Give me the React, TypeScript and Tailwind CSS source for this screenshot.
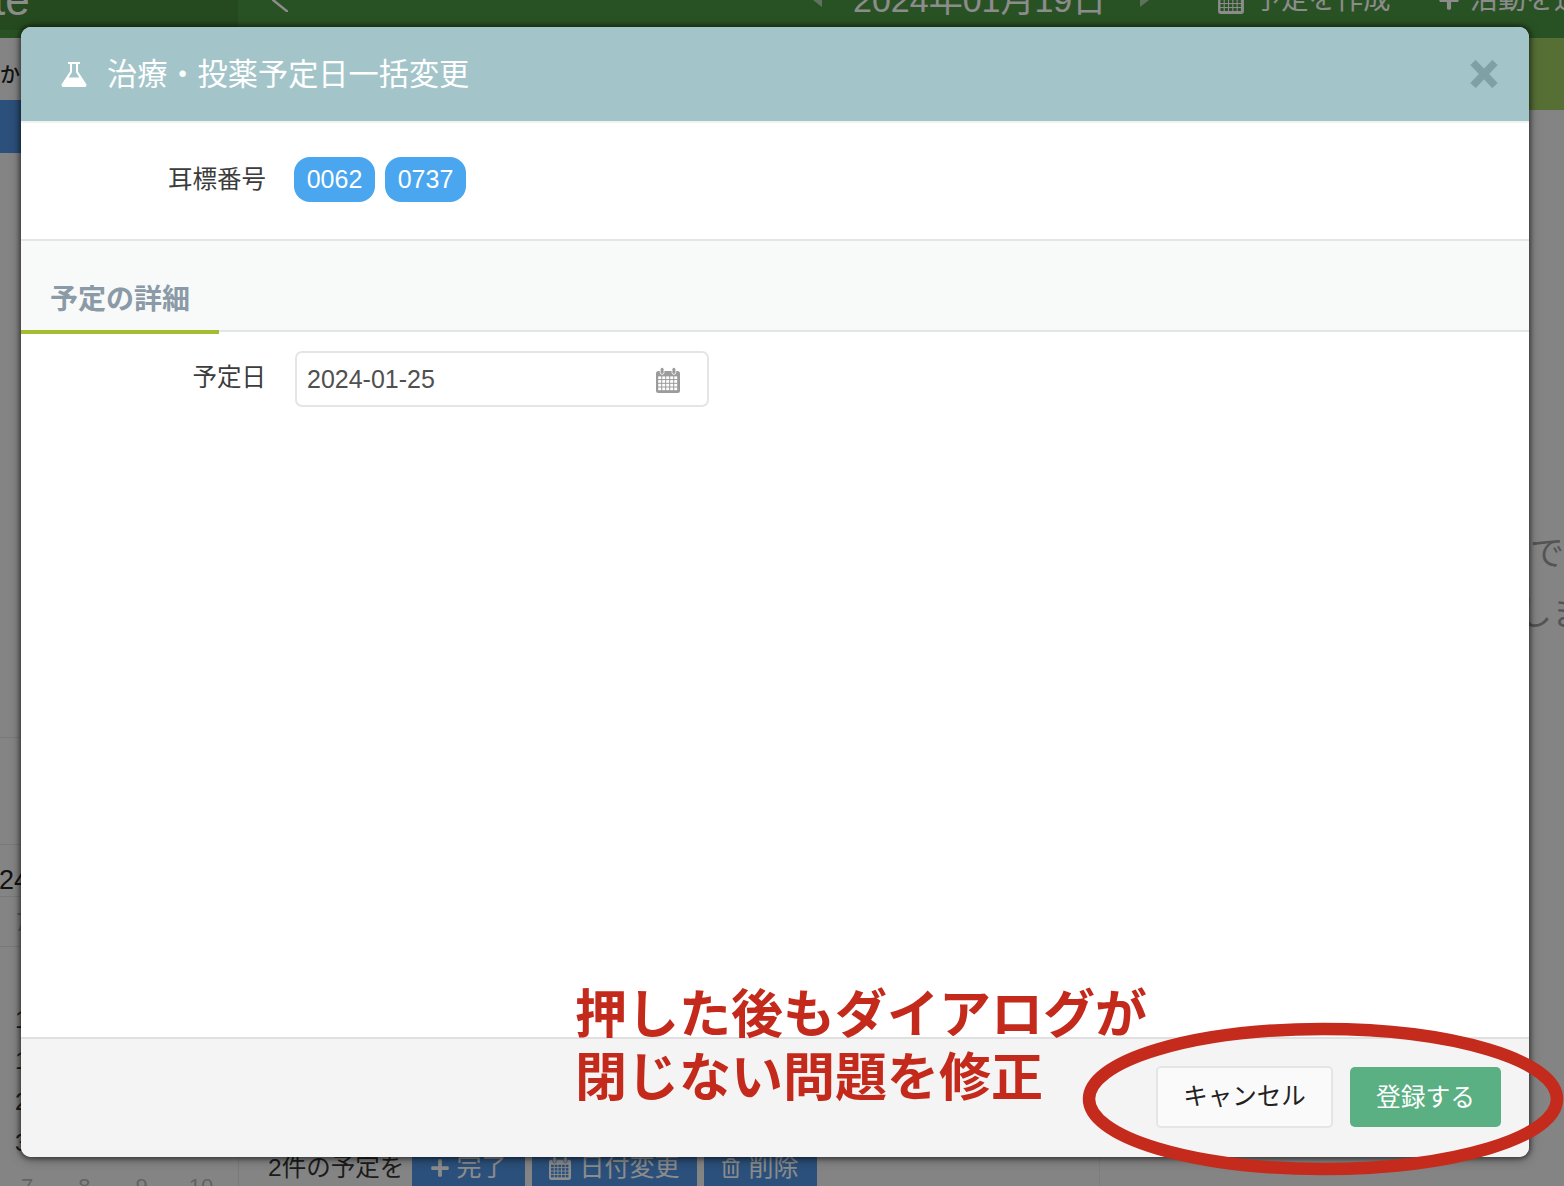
import React from "react";
import { FaPlus, FaRegTrashAlt } from "react-icons/fa";

function CalendarIcon({ className, cell = "white" }: { className: string; cell?: string }) {
  const cells = [];
  for (let r = 0; r < 4; r++) {
    for (let c = 0; c < 5; c++) {
      cells.push(<rect key={`${r}-${c}`} x={2.2 + c * 4} y={9.4 + r * 3.7} width="3" height="2.7" fill={cell} />);
    }
  }
  return (
    <svg viewBox="0 0 24 26" className={className}>
      <path d="M0 6.5a2.5 2.5 0 0 1 2.5-2.5H21.5a2.5 2.5 0 0 1 2.5 2.5V23.5a2.5 2.5 0 0 1-2.5 2.5H2.5A2.5 2.5 0 0 1 0 23.5Z" fill="currentColor" />
      {cells}
      <rect x="4.2" y="0.4" width="3.8" height="7" rx="1.9" fill="currentColor" stroke={cell} strokeWidth="0.8" />
      <rect x="16" y="0.4" width="3.8" height="7" rx="1.9" fill="currentColor" stroke={cell} strokeWidth="0.8" />
    </svg>
  );
}

function FlaskIcon() {
  return (
    <svg viewBox="0 0 26 26" className="h-[26px] w-[26px]" fill="currentColor" fillRule="evenodd">
      <path d="M7 1h12v2h-2v7.5l8.2 12.5c.8 1.3 0 3-1.6 3H2.4C.8 26 0 24.3.8 23L9 10.5V3H7ZM11 3v8.2L7.6 16.5h10.8L15 11.2V3Z" />
    </svg>
  );
}

// page behind the dialog, only the edges of it are visible
function BackgroundPage() {
  return (
    <div className="flex h-full flex-col bg-[#f1f1f1] text-[#2b2b2b]">
      <div className="flex h-[38px] shrink-0 overflow-hidden bg-[#4c9542] text-white">
        <div className="-mt-[30px] flex h-[60px] w-[238px] shrink-0 items-center overflow-hidden bg-[#45883a]">
          <span className="-ml-[7px] text-[44px] leading-none">te</span>
        </div>
        <div className="-mt-[30px] flex h-[60px] shrink-0 items-center whitespace-nowrap">
          <svg viewBox="0 0 16 24" className="ml-[34px] h-[24px] w-[16px] shrink-0" fill="none" stroke="currentColor" strokeWidth="2.5">
            <path d="M16 24 1 12 16 0" />
          </svg>
          <svg viewBox="0 0 9 14" className="ml-[525px] h-[14px] w-[9px] shrink-0" fill="currentColor" opacity="0.55">
            <path d="M9 0v14L0 7Z" />
          </svg>
          <span className="ml-[31px] w-[252px] text-[34px]">2024年01月19日</span>
          <svg viewBox="0 0 9 14" className="ml-[35px] h-[14px] w-[9px] shrink-0" fill="currentColor" opacity="0.55">
            <path d="M0 0v14l9-7Z" />
          </svg>
          <CalendarIcon className="ml-[69px] h-[28px] w-[26px] shrink-0" cell="#4c9542" />
          <span className="ml-[10px] w-[139px] text-[27.3px]">予定を作成</span>
          <FaPlus className="ml-[45px] h-[22px] w-[22px] shrink-0" />
          <span className="ml-[10px] text-[28px]">活動を追加</span>
        </div>
      </div>

      <div className="flex min-h-0 flex-1">
        <div className="flex w-[239px] shrink-0 flex-col overflow-hidden border-r border-[#dddddd] text-[24px]">
          <div className="flex h-[62px] shrink-0 items-end pb-[15px] text-[20px] font-medium leading-none text-[#222222]">か</div>
          <div className="h-[53px] shrink-0 bg-[#4f93e0]" />
          <div className="h-[585px] shrink-0 border-b border-[#dcdcdc]" />
          <div className="h-[107px] shrink-0 border-b border-[#dcdcdc]" />
          <div className="flex h-[52px] shrink-0 items-end border-b border-[#dcdcdc] pb-[2px] text-[27px] leading-none text-[#222222]">
            <span className="-ml-[1px]">24</span>
          </div>
          <div className="flex h-[50px] shrink-0 items-center border-b border-[#dcdcdc] pl-[16px] text-[#aaaaaa]">ｱ</div>
          <div className="flex h-[229px] shrink-0 flex-col pl-[15px] leading-[41px] text-[#333333]">
            <div className="pt-[52px]">1</div>
            <div>1</div>
            <div>2</div>
            <div>3</div>
          </div>
          <div className="flex gap-[45px] pl-[21px] text-[22px] leading-none text-[#b5b5b5]">
            <span>7</span>
            <span>8</span>
            <span>9</span>
            <span className="-ml-[4px]">10</span>
          </div>
        </div>

        <div className="flex min-w-0 flex-1 flex-col">
          <div className="h-[72px] shrink-0 bg-[#9cca62]" />
          <div className="flex min-h-0 flex-1">
            <div className="flex w-[861px] shrink-0 flex-col justify-end overflow-hidden border-r border-[#e4e4e4]">
              <div className="flex h-[36px] items-stretch pl-[29px]">
                <span className="flex w-[144px] items-center whitespace-nowrap text-[24.5px] text-[#333333]">2件の予定を</span>
                <div className="flex w-[113px] items-center justify-center gap-[6px] bg-[#4f93e0] text-[25px] text-white">
                  <FaPlus className="h-[20px] w-[20px]" />
                  完了
                </div>
                <div className="ml-[7px] flex w-[165px] items-center justify-center gap-[8px] bg-[#4f93e0] text-[25px] text-[#ffffff]">
                  <CalendarIcon className="h-[26px] w-[22px] text-white" cell="#4f93e0" />
                  日付変更
                </div>
                <div className="ml-[7px] flex w-[113px] items-center justify-center gap-[8px] bg-[#4f93e0] text-[25px] text-white">
                  <FaRegTrashAlt className="h-[20px] w-[18px]" />
                  削除
                </div>
              </div>
            </div>
            <div className="flex-1 overflow-hidden whitespace-nowrap pl-[330px] pt-[413px] text-[34px] leading-[60px] text-[#999999]">
              <div className="pl-[100px]">で</div>
              <div className="pl-[88px]">しま</div>
            </div>
          </div>
        </div>
      </div>
    </div>
  );
}

function Dialog() {
  return (
    <div className="absolute left-[21px] top-[27px] flex h-[1130px] w-[1508px] flex-col overflow-hidden rounded-[10px] bg-white shadow-[0_0_4px_2px_rgba(0,0,0,0.4),0_2px_12px_rgba(0,0,0,0.35)]">
      <div className="flex h-[96px] shrink-0 items-center border-b-2 border-[#f1f3f3] bg-[#a3c5c9] pl-[40px] pr-[31px] text-white">
        <FlaskIcon />
        <h1 className="ml-[20px] mt-[2px] text-[30.2px] font-normal leading-none">治療・投薬予定日一括変更</h1>
        <svg viewBox="0 0 28 28" className="ml-auto h-[28px] w-[28px] text-[#7fa0a4]" fill="none" stroke="currentColor" strokeWidth="7.5">
          <path d="M3 2.5 25 25.5M25 2.5 3 25.5" />
        </svg>
      </div>

      <div className="flex h-[118px] shrink-0 border-b-2 border-[#e3e6e7] pt-[34px]">
        <label className="mt-[3px] h-[40px] w-[245px] text-right text-[24.5px] leading-[40px] text-[#3c3c3c]">耳標番号</label>
        <div className="ml-[28px] flex gap-[10px]">
          <span className="flex h-[45px] w-[81px] items-center justify-center rounded-[16px] bg-[#4aa6ef] text-[25px] text-white">0062</span>
          <span className="flex h-[45px] w-[81px] items-center justify-center rounded-[16px] bg-[#4aa6ef] text-[25px] text-white">0737</span>
        </div>
      </div>

      <div className="flex h-[91px] shrink-0 border-b-2 border-[#e3e6e7] bg-[#f8f9f9]">
        <div className="-mb-[4px] flex w-[198px] items-end border-b-4 border-[#a2bd30] pb-[12px] pl-[29px]">
          <h2 className="text-[28px] font-bold leading-[36px] text-[#8a9aa6]">予定の詳細</h2>
        </div>
      </div>

      <div className="flex min-h-0 flex-1 pt-[19px]">
        <label className="mt-[1px] h-[52px] w-[245px] text-right text-[24.5px] leading-[52px] text-[#3c3c3c]">予定日</label>
        <div className="ml-[29px] flex h-[56px] w-[414px] items-center justify-between rounded-[7px] border-2 border-[#e2e6e9] pl-[10px] pr-[27px] pt-[1px] text-[25px] text-[#505050]">
          2024-01-25
          <CalendarIcon className="h-[26px] w-[24px] text-[#9b9b9b]" />
        </div>
      </div>

      <div className="flex h-[120px] shrink-0 items-center justify-end gap-[17px] border-t-2 border-[#e0e0e0] bg-[#f4f4f4] pb-[2px] pr-[28px]">
        <button className="h-[62px] w-[177px] rounded-[5px] border-2 border-[#e2e6e9] bg-[#fafafa] pt-[1px] text-[24.5px] text-[#222222]">キャンセル</button>
        <button className="h-[60px] w-[151px] rounded-[5px] bg-[#5ab082] pt-[1px] text-[24.8px] text-white">登録する</button>
      </div>
    </div>
  );
}

export default function App() {
  return (
    <div
      lang="ja"
      className="relative h-[1186px] w-[1564px] overflow-hidden font-['Liberation_Sans','Noto_Sans_CJK_JP',sans-serif]"
    >
      <BackgroundPage />
      <div className="absolute inset-0 bg-black/45" />
      <Dialog />

      {/* annotation drawn on top of the screenshot */}
      <div className="absolute left-[575px] top-[984px] whitespace-nowrap text-[52px] font-bold leading-[63px] text-[#c32a1c]">
        <div>押した後もダイアログが</div>
        <div>閉じない問題を修正</div>
      </div>
      <svg viewBox="0 0 500 170" className="absolute left-[1070px] top-[1014px] h-[170px] w-[500px]" fill="none" stroke="#c42b1d" strokeWidth="12.5">
        <ellipse cx="253" cy="85" rx="234" ry="70" />
      </svg>
    </div>
  );
}
